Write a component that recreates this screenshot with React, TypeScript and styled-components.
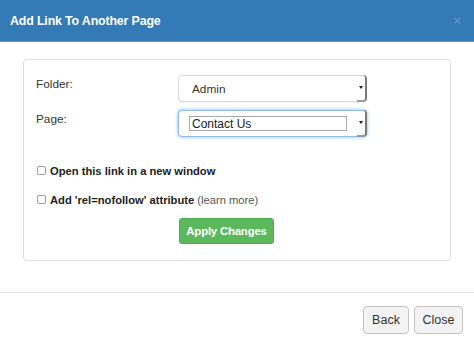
import { createGlobalStyle } from "styled-components";
import styled from "styled-components";

const GlobalStyle = createGlobalStyle`
  html, body {
    margin: 0;
    padding: 0;
    background: #ffffff;
    font-family: "Liberation Sans", Arial, sans-serif;
    color: #333333;
  }
`;

const Modal = styled.div`
  width: 474px;
  height: 345px;
  display: flex;
  flex-direction: column;
  background: #ffffff;
`;

const Header = styled.div`
  height: 42px;
  box-sizing: border-box;
  padding: 0 13px 0 10px;
  background: #337ab7;
  border-bottom: 1px solid #5d96c8;
  display: flex;
  align-items: center;
  justify-content: space-between;
`;

const Title = styled.h4`
  margin: 0;
  font-size: 12.4px;
  font-weight: 700;
  color: #ffffff;
  letter-spacing: -0.15px;
`;

const CloseX = styled.span`
  font-size: 13px;
  font-weight: 700;
  color: #5f92c4;
  line-height: 1;
`;

const Body = styled.div`
  padding: 17px 23px 0 23px;
  height: 251px;
  box-sizing: border-box;
  border-bottom: 1px solid #e5e5e5;
`;

const Panel = styled.div`
  box-sizing: border-box;
  width: 428px;
  height: 202px;
  border: 1px solid #dddddd;
  border-radius: 4px;
  padding: 15px 12px 0 12px;
  display: flex;
  flex-direction: column;
`;

const FieldRow = styled.div`
  display: grid;
  grid-template-columns: 142px 189px;
  align-items: start;
  margin-bottom: 8px;
`;

const Label = styled.label`
  font-size: 11.8px;
  padding-top: 2px;
  color: #333333;
`;

const SelectBox = styled.div<{ $focused?: boolean }>`
  position: relative;
  box-sizing: border-box;
  height: 27px;
  border: 1px solid ${(p) => (p.$focused ? "#8fbde8" : "#d9d9d9")};
  border-radius: 4px;
  background: #ffffff;
  box-shadow: ${(p) =>
    p.$focused
      ? "0 0 3px 1px rgba(102, 175, 233, 0.55)"
      : "0 1px 1px rgba(0, 0, 0, 0.05)"};
  display: flex;
  align-items: center;
  padding-left: 13px;
  font-size: 11.8px;
  color: #333333;
`;

const InnerInput = styled.div`
  box-sizing: border-box;
  width: 158px;
  height: 15px;
  margin-left: -3px;
  border: 1px solid #a9a9a9;
  display: flex;
  align-items: center;
  padding-left: 2px;
  font-size: 12px;
  color: #222222;
`;

const Arrow = styled.div`
  position: absolute;
  right: -1px;
  top: -1px;
  bottom: -1px;
  width: 8px;
  border-right: 2px solid #7a7a7a;
  border-bottom: 2px solid #9a9a9a;
  border-radius: 0 4px 4px 0;
  display: flex;
  align-items: center;
  justify-content: center;

  &::after {
    content: "";
    border-left: 2.5px solid transparent;
    border-right: 2.5px solid transparent;
    border-top: 3px solid #222222;
  }
`;

const CheckRow = styled.label<{ $gap?: number }>`
  display: flex;
  align-items: center;
  gap: 4px;
  font-size: 11.2px;
  font-weight: 700;
  color: #222222;
  height: 15px;
  margin-top: ${(p) => p.$gap ?? 0}px;
`;

const Box = styled.span`
  box-sizing: border-box;
  width: 9px;
  height: 9px;
  border: 1px solid #9e9e9e;
  border-radius: 2px;
  background: #ffffff;
  margin-left: 1px;
`;

const Muted = styled.span`
  font-weight: 400;
  color: #555555;
  margin-left: 0;
`;

const ApplyRow = styled.div`
  display: flex;
  padding-left: 143px;
  margin-top: 11px;
`;

const ApplyButton = styled.button`
  box-sizing: border-box;
  width: 95px;
  height: 26px;
  border: 1px solid #4cae4c;
  border-radius: 3px;
  background: #5cb85c;
  color: #ffffff;
  font-family: inherit;
  font-size: 11.4px;
  font-weight: 700;
  letter-spacing: -0.2px;
  padding: 0;
`;

const Footer = styled.div`
  flex: 1;
  display: flex;
  justify-content: flex-end;
  align-items: flex-start;
  gap: 5px;
  padding: 13px 11px 0 0;
`;

const FooterButton = styled.button<{ $w: number }>`
  box-sizing: border-box;
  width: ${(p) => p.$w}px;
  height: 28px;
  border: 1px solid #c4c4c4;
  border-radius: 4px;
  background: #f3f3f3;
  color: #333333;
  font-family: inherit;
  font-size: 12.5px;
  padding: 0;
`;

export default function App() {
  return (
    <>
      <GlobalStyle />
      <Modal>
        <Header>
          <Title>Add Link To Another Page</Title>
          <CloseX>×</CloseX>
        </Header>
        <Body>
          <Panel>
            <FieldRow>
              <Label>Folder:</Label>
              <SelectBox>
                Admin
                <Arrow />
              </SelectBox>
            </FieldRow>
            <FieldRow>
              <Label>Page:</Label>
              <SelectBox $focused>
                <InnerInput>Contact Us</InnerInput>
                <Arrow />
              </SelectBox>
            </FieldRow>
            <CheckRow $gap={18}>
              <Box />
              Open this link in a new window
            </CheckRow>
            <CheckRow $gap={14}>
              <Box />
              <span>
                Add 'rel=nofollow' attribute <Muted>(learn more)</Muted>
              </span>
            </CheckRow>
            <ApplyRow>
              <ApplyButton>Apply Changes</ApplyButton>
            </ApplyRow>
          </Panel>
        </Body>
        <Footer>
          <FooterButton $w={46}>Back</FooterButton>
          <FooterButton $w={49}>Close</FooterButton>
        </Footer>
      </Modal>
    </>
  );
}
